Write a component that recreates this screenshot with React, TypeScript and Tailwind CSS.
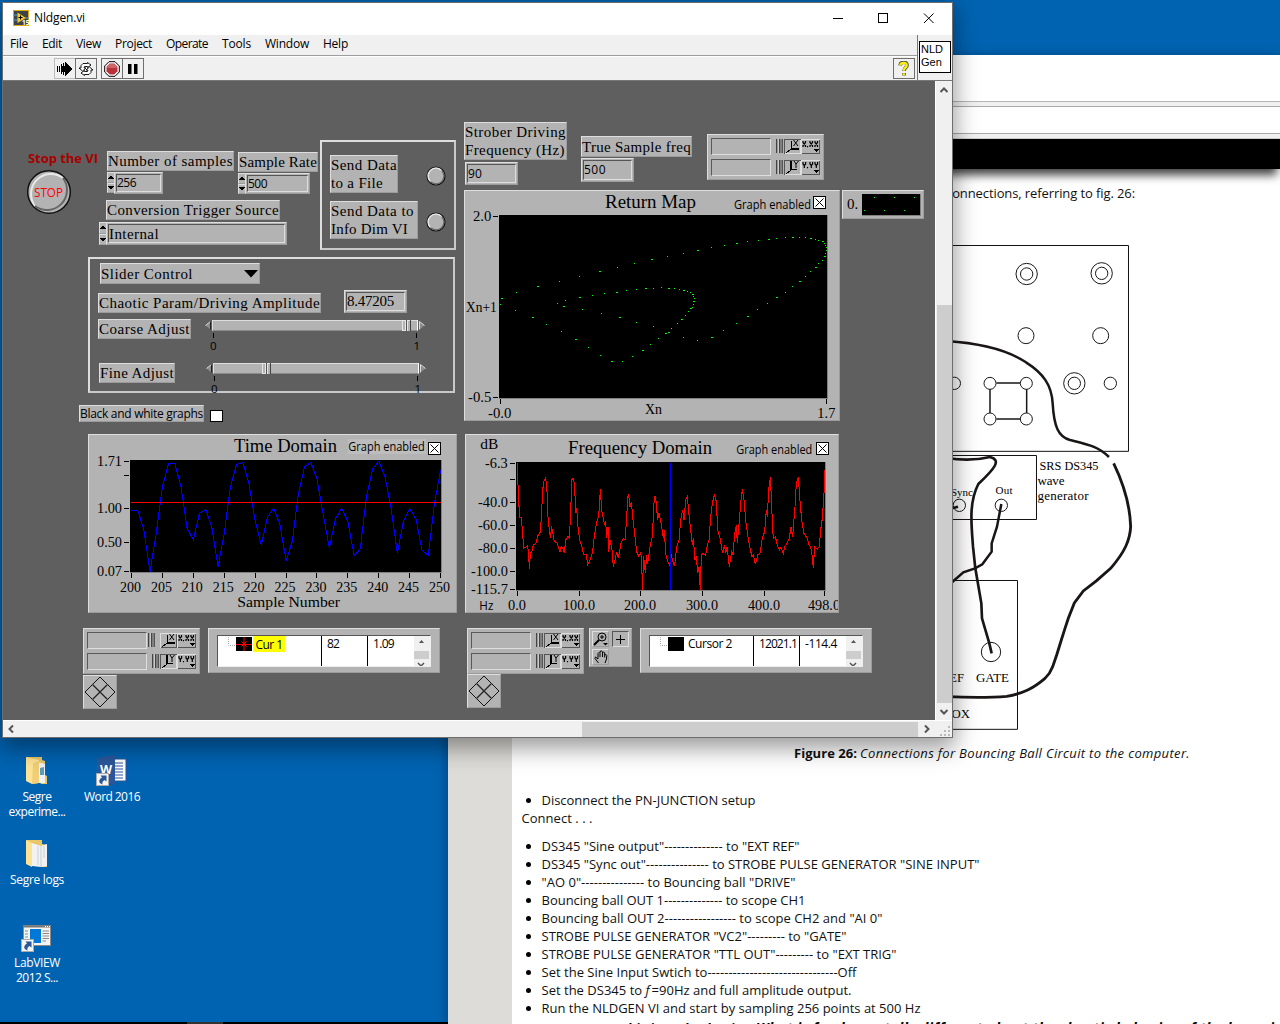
import React, { useLayoutEffect, useRef, useState } from "react";

const serif = "font-['Liberation_Serif',serif]";
const sans = "font-['Open_Sans',sans-serif]";

/* One line of text whose tracking is measured so that it fills `w` pixels. */
function Fit({ w, className = "", children }: { w: number; className?: string; children: string }) {
  const ref = useRef<HTMLSpanElement>(null);
  const [spacing, setSpacing] = useState<number | null>(null);
  useLayoutEffect(() => {
    const el = ref.current;
    if (!el || spacing !== null) return;
    setSpacing((w - el.getBoundingClientRect().width) / children.length);
  }, [w, children, spacing]);
  return (
    <span ref={ref} className={`inline-block shrink-0 whitespace-pre ${className}`} style={{ letterSpacing: spacing ?? 0 }}>
      {children}
    </span>
  );
}

const raised = "bg-[#b3b3b3] border border-t-[#dedede] border-l-[#dedede] border-r-[#9c9c9c] border-b-[#9c9c9c]";

function Label({ className, lines }: { className: string; lines: [string, number][] }) {
  return (
    <div className={`absolute flex flex-col items-start justify-center text-[15px] leading-[18px] ${serif} ${raised} ${className}`}>
      {lines.map(([t, w]) => (
        <Fit key={t} w={w}>{t}</Fit>
      ))}
    </div>
  );
}

function Field({ className, text, w, font = sans }: { className: string; text: string; w: number; font?: string }) {
  return (
    <div className={`absolute flex p-px ${raised} ${className}`}>
      <div className={`flex flex-1 items-center border border-t-[#555] border-l-[#555] border-r-[#dedede] border-b-[#dedede] bg-[#b3b3b3] ${font}`}>
        <Fit w={w}>{text}</Fit>
      </div>
    </div>
  );
}

function Spinner({ className }: { className: string }) {
  return (
    <div className={`absolute flex w-[8px] flex-col ${className}`}>
      <div className={`flex flex-1 items-center justify-center ${raised}`}>
        <svg width="6" height="5" viewBox="0 0 6 5" shapeRendering="crispEdges"><path d="M3 0L6 4H0Z" /></svg>
      </div>
      <div className={`flex flex-1 items-center justify-center ${raised}`}>
        <svg width="6" height="5" viewBox="0 0 6 5" shapeRendering="crispEdges"><path d="M3 5L6 1H0Z" /></svg>
      </div>
    </div>
  );
}

function Led({ className }: { className: string }) {
  return (
    <svg className={`absolute ${className}`} width="20" height="20" viewBox="0 0 20 20">
      <circle cx="10" cy="10" r="9" fill="#b3b3b3" stroke="#111" strokeWidth="1.2" />
      <path d="M4 15A7.8 7.8 0 0 1 15 4" fill="none" stroke="#e6e6e6" strokeWidth="1.4" />
      <path d="M5 16A7.8 7.8 0 0 0 16 5" fill="none" stroke="#666" strokeWidth="1.2" />
    </svg>
  );
}

function Frame({ className }: { className: string }) {
  return <div className={`absolute border-2 border-t-[#dedede] border-l-[#dedede] border-r-[#c9c9c9] border-b-[#c9c9c9] ${className}`} />;
}

function Slider({ className, thumb }: { className: string; thumb: string }) {
  return (
    <div className={`absolute w-[220px] ${className}`}>
      <div className="flex h-[11px] items-center justify-between">
        <svg width="6" height="9" viewBox="0 0 6 9"><path d="M5.5 .5V8.5L.5 4.5Z" fill="#8c8c8c" /><path d="M5.5 .5L.5 4.5" stroke="#ddd" /><path d="M5.5 .5V8.5" stroke="#222" /></svg>
        <div className="relative h-[11px] w-[206px] border border-t-[#dedede] border-l-[#dedede] border-r-white border-b-[#8a8a8a] bg-[#b3b3b3]">
          <div className={`absolute -top-px flex h-[11px] w-[9px] ${thumb}`}>
            <div className="h-full w-[4px] border border-[#e6e6e6] bg-[#b3b3b3]" />
            <div className="h-full w-px bg-[#555]" />
            <div className="h-full w-[3px] border-l border-t border-[#e6e6e6] bg-[#b3b3b3]" />
            <div className="h-full w-px bg-[#444]" />
          </div>
        </div>
        <svg width="6" height="9" viewBox="0 0 6 9"><path d="M.5 .5V8.5L5.5 4.5Z" fill="#8c8c8c" /><path d="M.5 8.5V.5L5.5 4.5" fill="none" stroke="#ddd" /></svg>
      </div>
      <div className={`flex justify-between pt-[2px] pr-[5px] pl-[5px] text-[11.5px] leading-[15px] ${sans}`}>
        <div className="flex flex-col items-center"><div className="h-[5px] w-px bg-black" />0</div>
        <div className="flex flex-col items-center"><div className="h-[5px] w-px bg-black" />1</div>
      </div>
    </div>
  );
}

function CrossBox() {
  return (
    <svg width="13" height="13" viewBox="0 0 13 13">
      <rect x=".5" y=".5" width="12" height="12" fill="#fff" stroke="#000" />
      <path d="M2.5 2.5L10.5 10.5M10.5 2.5L2.5 10.5" stroke="#000" />
    </svg>
  );
}

function ScaleRow({ axis, locked }: { axis: "X" | "Y"; locked: boolean }) {
  return (
    <div className="flex h-[17px] items-center justify-between">
      <div className="h-[17px] w-[60px] border border-t-[#5a5a5a] border-l-[#5a5a5a] border-r-[#dedede] border-b-[#dedede]" />
      <svg className="overflow-visible" width="46" height="17" viewBox="0 0 46 17" shapeRendering="crispEdges">
        <g transform={locked ? "translate(-4 0)" : undefined}>
          <rect x="2" y="1" width="7" height="14" fill="#999" />
          <path d="M2.500 1V15M5.500 1V15" stroke="#444" />
          <path d="M4.500 1V15" stroke="#ccc" />
          <rect x="6" y="1" width="2" height="14" fill="#808080" />
          <path d="M8.500 1V15" stroke="#555" />
        </g>
        <path d="M10.500 15.500V1.500H26.500" fill="none" stroke={locked ? "#dedede" : "#555"} />
        <path d="M10.500 15.500H26.500V1.500" fill="none" stroke={locked ? "#555" : "#dedede"} />
        <path d={axis === "X" ? "M17.500 3V11" : "M17 2V11"} stroke="#000" strokeWidth={axis === "X" ? 1 : 2} />
        <path d={axis === "X" ? "M17 11H25" : "M17 10.500H23"} stroke="#000" strokeWidth={axis === "X" ? 2 : 1} />
        <path d="M17 11L12.500 14.500" stroke="#000" />
        <path d={axis === "X" ? "M19.500 2L24 8M24 2L19.500 8" : "M20 2L22 5L24.500 2M22 5V9"} fill="none" stroke="#000" shapeRendering="auto" />
        <path d="M27.500 15.500V1.500H46" fill="none" stroke="#dedede" />
        <path d="M27.500 15.500H45.500V1.500" fill="none" stroke="#555" />
        <g fill="none" stroke="#000" shapeRendering="auto" strokeWidth="1.200">
          {[29, 36, 41].map((x) => (
            <path key={x} transform={`translate(${x} 3)`} d={axis === "X" ? "M0 0V1.500L2.500 4.500V6M2.500 0V1.500L0 4.500V6" : "M0 0V2L1.300 3.500L2.600 2V0M1.300 3.500V6"} />
          ))}
          <path d="M33.500 8V9.300" />
        </g>
        <path d="M39 11H45L42 14Z" />
      </svg>
    </div>
  );
}

function ScalePalette({ className, lock }: { className: string; lock: boolean }) {
  return (
    <div className={`absolute flex h-[46px] w-[117px] flex-col justify-between px-[3px] py-[3px] ${raised} ${className}`}>
      <ScaleRow axis="X" locked={lock} />
      <ScaleRow axis="Y" locked={false} />
    </div>
  );
}

function NavPad({ className }: { className: string }) {
  return (
    <div className={`absolute flex h-[34px] w-[34px] items-center justify-center ${raised} ${className}`}>
      <svg width="32" height="32" viewBox="0 0 32 32" fill="none" stroke="#000">
        <path d="M16 1L23.300 8.300L16 15.600L8.700 8.300ZM8.300 8.700L15.600 16L8.300 23.300L1 16ZM23.700 8.700L31 16L23.700 23.300L16.400 16ZM16 16.400L23.300 23.700L16 31L8.700 23.700Z" strokeWidth=".9" />
      </svg>
    </div>
  );
}

function CursorTable({ className, name, x, y, selected }: { className: string; name: string; x: string; y: string; selected: boolean }) {
  return (
    <div className={`absolute h-[45px] w-[232px] pt-[6px] pl-[8px] ${raised} ${className}`}>
      <div className={`flex h-[32px] w-[214px] overflow-hidden border border-t-[#555] border-l-[#555] border-r-[#eee] border-b-[#eee] bg-white text-[12px] leading-[15px] ${sans}`}>
        <div className="flex w-[104px] shrink-0 items-start border-r border-black pt-px">
          <svg width="18" height="15" viewBox="0 0 18 15"><path d="M10.500 0V8.500H18" fill="none" stroke="#aaa" strokeDasharray="1 1" /></svg>
          <svg width="16" height="14" viewBox="0 0 16 14">
            <rect width="16" height="14" fill="#000" />
            {selected && <path d="M8 0V4M8 10V14M0 7.500H5M11 7.500H16M5.500 4.500L10.500 9.500M10.500 4.500L5.500 9.500M8 4V10M5 7.500H11" stroke="#f00" />}
          </svg>
          {selected ? (
            <div className="-mt-px ml-px flex h-[16px] w-[32px] items-center justify-center bg-[#ff0]"><Fit w={27}>{name}</Fit></div>
          ) : (
            <div className="-mt-px ml-[4px]"><Fit w={44}>{name}</Fit></div>
          )}
        </div>
        <div className="w-[46px] shrink-0 border-r border-black pl-[5px]"><Fit w={selected ? 12 : 38}>{x}</Fit></div>
        <div className="w-[46px] shrink-0 pl-[5px]"><Fit w={selected ? 21 : 32}>{y}</Fit></div>
        <svg width="16" height="30" viewBox="0 0 16 30">
          <rect width="16" height="30" fill="#f0f0f0" />
          <rect y="15" width="15" height="8" fill="#cdcdcd" />
          <path d="M5 7L7.500 4L10 7Z" fill="#555" />
          <path d="M4 27L7 30L10 27" fill="none" stroke="#555" strokeWidth="1.500" />
        </svg>
      </div>
    </div>
  );
}

type Txt = [string, number, number, number, number];
/* Chart captions: text, left, baseline, width, size (in thirds of a pixel). */
function Captions({ items, family }: { items: Txt[]; family: string }) {
  return (
    <g fontFamily={family} fill="#000">
      {items.map(([t, x, y, w, s]) => (
        <text key={t + x} x={x} y={y} fontSize={s} textLength={w} lengthAdjust="spacingAndGlyphs">{t}</text>
      ))}
    </g>
  );
}

const SERIF = "Liberation Serif, serif";
const SANS = "Open Sans, sans-serif";

const returnDots = [
  123, 355, 122, 373, 169, 337, 232, 319, 297, 304, 358, 289, 417, 274, 471, 262, 523, 250, 574, 238, 622, 229, 669, 220, 711, 211, 753, 202,
  793, 196, 828, 190, 861, 184, 894, 181, 924, 178, 949, 175, 975, 172, 997, 172, 1018, 172, 1036, 172, 1051, 175, 1065, 178, 1076, 181,
  1086, 184, 1093, 190, 1096, 196, 1099, 203, 1099, 211, 1096, 220, 1093, 229, 1086, 240, 1075, 250, 1065, 262, 1051, 275, 1036, 289,
  1017, 304, 997, 319, 975, 336, 949, 352, 922, 370, 892, 389, 861, 409, 828, 430, 790, 451, 753, 473, 712, 481, 670, 472, 625, 457,
  579, 439, 528, 427, 477, 412, 423, 400, 367, 388, 310, 379, 292, 370, 315, 361, 357, 352, 396, 346, 433, 340, 468, 336, 499, 331,
  529, 328, 556, 325, 580, 325, 603, 323, 624, 325, 642, 325, 657, 327, 670, 330, 683, 334, 691, 338, 697, 343, 700, 349, 702, 356,
  700, 364, 699, 373, 697, 381, 691, 385, 685, 394, 676, 406, 664, 418, 651, 430, 634, 445, 616, 459, 594, 475, 570, 493, 547, 510,
  516, 528, 487, 544, 454, 544, 420, 526, 384, 502, 345, 478, 303, 454, 258, 433, 216, 412, 166, 391,
];

function ReturnMap() {
  const dots: React.ReactNode[] = [];
  for (let i = 0; i < returnDots.length; i += 2) {
    const x = Math.floor(returnDots[i] / 3) * 3;
    const y = Math.floor(returnDots[i + 1] / 3) * 3;
    dots.push(<rect key={i} x={x} y={y} width={i % 3 === 0 ? 6 : 3} height="3" />);
  }
  return (
    <svg className="block" width="374" height="229" viewBox="15 33 1122 687">
      <g shapeRendering="crispEdges">
        <rect x="117" y="105" width="987" height="552" fill="#808080" />
        <rect x="117" y="105" width="984" height="549" fill="#000" />
        <g fill="#0f0">{dots}</g>
        <path d="M99 109.500H114M99 652.500H114M121.500 657V672M1099.500 657V672" stroke="#000" strokeWidth="3" />
      </g>
      <Captions family={SERIF} items={[
        ["Return Map", 435, 84, 273, 54], ["2.0", 39, 123, 55, 45], ["-0.5", 24, 666, 70, 45], ["-0.0", 84, 714, 70, 45],
        ["1.7", 1072, 714, 54, 45], ["Xn+1", 18, 397, 92, 42], ["Xn", 555, 702, 51, 42],
      ]} />
      <Captions family={SANS} items={[["Graph enabled", 822, 87, 231, 36]]} />
    </svg>
  );
}

const timeSamples = [
  243, 240, 300, 425, 310, 170, 100, 100, 170, 295, 329, 250, 238, 293, 410, 310, 170, 103, 97, 160, 272, 345, 260, 235, 283, 392, 335, 190,
  110, 97, 147, 253, 355, 265, 235, 275, 376, 357, 200, 116, 94, 140, 237, 370, 272, 235, 267, 361, 376, 220, 120,
];

function TimeDomain() {
  const pts = timeSamples.map((y, i) => `${154.5 + i * 18.55},${y}`).join(" ");
  const ticks = Array.from({ length: 11 }, (_, i) => `M${154.5 + Math.round(i * 30.9) * 3} 429V444`).join("");
  return (
    <svg className="block" width="367" height="177" viewBox="27 15 1101 531">
      <g shapeRendering="crispEdges">
        <rect x="150" y="90" width="936" height="339" fill="#808080" />
        <rect x="150" y="90" width="933" height="336" fill="#000" />
        <polyline points={pts} fill="none" stroke="#00f" strokeWidth="3" />
        <path d="M153 217.500H1083" stroke="#f00" strokeWidth="3" />
        <path d={`M132 94.500H147M132 136.500H147M132 235.500H147M132 337.500H147M132 424.500H147${ticks}`} stroke="#000" strokeWidth="3" />
      </g>
      <Captions family={SERIF} items={[
        ["Time Domain", 462, 66, 309, 54], ["1.71", 51, 108, 75, 45], ["1.00", 51, 249, 75, 45], ["0.50", 51, 351, 75, 45], ["0.07", 51, 438, 75, 45],
        ...Array.from({ length: 11 }, (_, i): Txt => [String(200 + i * 5), 120 + i * 92.7, 486, 63, 45]),
        ["Sample Number", 472, 531, 308, 45],
      ]} />
      <rect x="804" y="27" width="234" height="45" fill="#bdbdbd" />
      <Captions family={SANS} items={[["Graph enabled", 805, 64, 229, 36]]} />
    </svg>
  );
}

const spectrum =
  "172,100 175,195 179,262 184,262 188,310 191,355 200,350 203,347 206,375 208,417 211,372 216,362 220,345 228,340 233,318 240,308 244,265 248,180 252,152 257,143 261,185 264,260 269,310 272,325 274,287 280,318 283,335 290,337 300,367 303,350 308,355 313,370 317,330 324,320 328,325 332,250 335,150 339,143 343,160 348,250 350,235 354,290 359,330 366,350 370,372 378,372 383,403 390,390 397,370 403,320 410,275 416,260 421,178 425,240 430,265 434,285 437,272 440,325 444,290 446,365 450,330 456,360 460,410 466,385 470,365 475,383 483,340 490,325 495,330 500,265 503,200 506,195 510,230 514,215 519,270 524,310 530,365 536,378 541,370 545,380 547,480 549,430 551,378 556,430 560,375 563,400 570,350 577,320 583,200 587,200 593,270 597,250 605,290 610,325 613,300 617,370 622,390 629,408 633,372 640,400 644,407 650,350 657,330 662,270 668,240 672,270 677,210 682,200 686,245 692,300 697,345 700,325 705,390 709,378 713,430 717,410 721,480 724,375 730,370 737,375 741,350 747,330 752,260 757,220 763,195 769,215 773,300 780,325 788,370 793,345 797,370 801,350 808,410 815,365 819,375 824,310 829,285 832,340 838,270 843,210 847,178 852,210 858,280 864,320 870,355 876,380 880,375 886,403 893,375 900,370 907,325 914,305 919,240 922,262 926,180 931,142 934,200 938,300 940,325 946,320 952,345 958,360 962,352 970,370 974,350 981,340 988,325 993,290 998,320 1005,230 1009,160 1015,142 1019,200 1025,270 1032,310 1042,325 1047,345 1052,350 1056,375 1060,415 1064,350 1072,357 1078,350 1082,300 1087,265 1092,190 1094,120";

function FrequencyDomain() {
  return (
    <svg className="block" width="372" height="177" viewBox="18 15 1116 531">
      <g shapeRendering="crispEdges">
        <rect x="168" y="96" width="930" height="387" fill="#808080" />
        <rect x="168" y="96" width="927" height="384" fill="#000" />
        <polyline points={spectrum} fill="none" stroke="#f00" strokeWidth="3" />
        <path d="M631.500 99V480" stroke="#00f" strokeWidth="3" />
        <path d="M150 100.500H165M150 148.500H165M150 217.500H165M150 286.500H165M150 355.500H165M150 424.500H165M150 478.500H165M172.500 483V498M358.500 483V498M541.500 483V498M727.500 483V498M913.500 483V498M1093.500 483V498" stroke="#000" strokeWidth="3" />
      </g>
      <Captions family={SERIF} items={[
        ["Frequency Domain", 324, 72, 432, 54], ["dB", 61, 58, 54, 45], ["-6.3", 75, 114, 68, 45], ["-40.0", 54, 231, 90, 45],
        ["-60.0", 54, 300, 90, 45], ["-80.0", 54, 369, 90, 45], ["-100.0", 33, 438, 111, 45], ["-115.7", 33, 492, 111, 45],
        ["0.0", 144, 540, 54, 45], ["100.0", 309, 540, 96, 45], ["200.0", 492, 540, 96, 45], ["300.0", 678, 540, 96, 45],
        ["400.0", 864, 540, 96, 45], ["498.0", 1044, 540, 96, 45],
      ]} />
      <Captions family={SANS} items={[["Graph enabled", 829, 72, 228, 36], ["Hz", 58, 540, 42, 36]]} />
    </svg>
  );
}

function FrontPanel() {
  return (
    <div className="relative h-[639px] w-[932px] overflow-hidden bg-[#5f5f5f]">
      <div className="absolute -top-[81px] -left-[3px] text-[12px]">
        <div className={`absolute top-[150px] left-[28px] text-[13px] leading-[17px] font-bold text-[#a80000] ${sans}`}><Fit w={70}>Stop the VI</Fit></div>
        <svg className="absolute top-[169px] left-[26px]" width="46" height="46" viewBox="0 0 46 46">
          <circle cx="23" cy="23" r="21.300" fill="#b3b3b3" stroke="#111" strokeWidth="1.500" />
          <path d="M9 37A20 20 0 0 1 37 9" fill="none" stroke="#e8e8e8" strokeWidth="2" />
          <path d="M9 37A20 20 0 0 0 37 9" fill="none" stroke="#666" strokeWidth="2" />
          <text x="8" y="28" fontSize="12.500" fontFamily={SANS} textLength="29" lengthAdjust="spacingAndGlyphs" fill="#f00">STOP</text>
        </svg>

        <Label className="top-[151px] left-[107px] h-[20px] w-[127px]" lines={[["Number of samples", 125]]} />
        <Spinner className="top-[172px] left-[107px] h-[21px]" />
        <Field className="top-[172px] left-[114px] h-[22px] w-[49px]" text="256" w={19} />
        <Label className="top-[152px] left-[238px] h-[20px] w-[80px]" lines={[["Sample Rate", 78]]} />
        <Spinner className="top-[173px] left-[238px] h-[21px]" />
        <Field className="top-[173px] left-[245px] h-[21px] w-[65px]" text="500" w={19} />
        <Label className="top-[200px] left-[106px] h-[20px] w-[174px]" lines={[["Conversion Trigger Source", 172]]} />
        <Spinner className="top-[222px] left-[99px] h-[23px]" />
        <Field className="top-[222px] left-[106px] h-[23px] w-[181px] text-[15px] leading-[19px]" text="Internal" w={50} font={`${serif} pt-px`} />

        <Frame className="top-[140px] left-[320px] h-[110px] w-[136px]" />
        <Label className="top-[155px] left-[330px] h-[38px] w-[68px]" lines={[["Send Data", 66], ["to a File", 52]]} />
        <Led className="top-[166px] left-[426px]" />
        <Label className="top-[201px] left-[330px] h-[38px] w-[88px]" lines={[["Send Data to", 83], ["Info Dim VI", 77]]} />
        <Led className="top-[212px] left-[426px]" />

        <Frame className="top-[257px] left-[88px] h-[136px] w-[367px]" />
        <div className={`absolute top-[263px] left-[100px] flex h-[21px] w-[160px] items-center justify-between pt-px pr-px text-[15px] leading-[18px] ${serif} ${raised}`}>
          <Fit w={92}>Slider Control</Fit>
          <svg width="14" height="8" viewBox="0 0 14 8"><path d="M0 0H14L7 7.500Z" /></svg>
        </div>
        <Label className="top-[293px] left-[98px] h-[20px] w-[223px]" lines={[["Chaotic Param/Driving Amplitude", 221]]} />
        <Field className="top-[290px] left-[344px] h-[23px] w-[63px] text-[15px]" text="8.47205" w={47} font={serif} />
        <Label className="top-[319px] left-[98px] h-[20px] w-[93px]" lines={[["Coarse Adjust", 91]]} />
        <Slider className="top-[320px] left-[205px]" thumb="left-[189px]" />
        <Label className="top-[363px] left-[99px] h-[20px] w-[76px]" lines={[["Fine Adjust", 74]]} />
        <Slider className="top-[363px] left-[206px]" thumb="left-[48px]" />
        <div className={`absolute top-[405px] left-[79px] flex h-[17px] w-[125px] items-center ${sans} ${raised}`}><Fit w={123}>Black and white graphs</Fit></div>
        <div className="absolute top-[410px] left-[210px] h-[12px] w-[13px] border border-black bg-white" />

        <Label className="top-[122px] left-[464px] h-[38px] w-[103px]" lines={[["Strober Driving", 101], ["Frequency (Hz)", 100]]} />
        <Field className="top-[162px] left-[465px] h-[23px] w-[53px]" text="90" w={14} />
        <Label className="top-[136px] left-[581px] h-[21px] w-[111px]" lines={[["True Sample freq", 109]]} />
        <Field className="top-[158px] left-[581px] h-[24px] w-[53px]" text="500" w={22} />
        <ScalePalette className="top-[134px] left-[707px]" lock={false} />

        <div className={`absolute top-[190px] left-[464px] ${raised}`}><ReturnMap /></div>
        <div className="absolute top-[196px] left-[813px]"><CrossBox /></div>
        <div className={`absolute top-[190px] left-[842px] flex h-[29px] w-[82px] items-center justify-between pr-[2px] pl-[4px] text-[15px] ${serif} ${raised}`}>
          0.
          <svg width="59" height="22" viewBox="0 0 59 22" shapeRendering="crispEdges">
            <rect width="59" height="22" fill="#808080" /><rect width="58" height="21" fill="#000" />
            <path d="M12 3.500h1M32 3.500h1M52 3.500h1M2 16.500h1M22 16.500h1M42 16.500h1" stroke="#0f0" />
          </svg>
        </div>

        <div className={`absolute top-[434px] left-[88px] ${raised}`}><TimeDomain /></div>
        <div className="absolute top-[442px] left-[428px]"><CrossBox /></div>
        <div className={`absolute top-[434px] left-[465px] ${raised}`}><FrequencyDomain /></div>
        <div className="absolute top-[442px] left-[816px]"><CrossBox /></div>

        <ScalePalette className="top-[628px] left-[83px]" lock />
        <NavPad className="top-[675px] left-[83px]" />
        <CursorTable className="top-[628px] left-[208px]" name="Cur 1" x="82" y="1.09" selected />
        <ScalePalette className="top-[628px] left-[467px]" lock={false} />
        <NavPad className="top-[674px] left-[467px]" />
        <div className={`absolute top-[628px] left-[589px] grid h-[39px] w-[43px] grid-cols-2 gap-x-[3px] gap-y-[2px] p-[2px] ${raised}`}>
          <div className={`flex items-center justify-center ${raised}`}>
            <svg width="15" height="14" viewBox="0 0 15 14" fill="none" stroke="#000"><circle cx="9" cy="5" r="4" /><path d="M9 3V7M7 5H11" /><path d="M6 8L1 13" strokeWidth="2" /><path d="M10 11H15L12.500 13.500Z" fill="#000" stroke="none" /></svg>
          </div>
          <div className="flex items-center justify-center border border-t-[#555] border-l-[#555] border-r-[#dedede] border-b-[#dedede]">
            <svg width="9" height="9" viewBox="0 0 9 9"><path d="M4.500 0V9M0 4.500H9" stroke="#000" /></svg>
          </div>
          <div className={`flex items-center justify-center ${raised}`}>
            <svg width="14" height="14" viewBox="0 0 14 14" fill="none" stroke="#000"><path d="M4.500 13L1 8.500L1.500 7L4 9V3.500L5 2.500L6 3.500V7M6 3V1.500L7.500 .8L8.500 2V7M8.500 3L9.700 2L10.700 3V7.500M10.700 5L12 4.500L12.800 5.500L12.500 9L11 13" /></svg>
          </div>
        </div>
        <CursorTable className="top-[628px] left-[640px]" name="Cursor 2" x="12021.1" y="-114.4" selected={false} />
      </div>
    </div>
  );
}

function ToolButton({ children, className = "border-[#6f6f6f]" }: { children: React.ReactNode; className?: string }) {
  return <div className={`flex h-[21px] w-[22px] items-center justify-center border bg-[#f0f0f0] ${className}`}>{children}</div>;
}

const menus: [string, number, string][] = [
  ["File", 18, "ml-[7px]"], ["Edit", 20, "ml-[14px]"], ["View", 25, "ml-[14px]"], ["Project", 37, "ml-[14px]"],
  ["Operate", 42, "ml-[14px]"], ["Tools", 29, "ml-[14px]"], ["Window", 44, "ml-[14px]"], ["Help", 25, "ml-[14px]"],
];

function LabViewWindow() {
  return (
    <div className={`absolute top-[2px] left-[2px] flex h-[736px] w-[951px] flex-col border border-[#6e6e6e] bg-[#f0f0f0] shadow-[0_8px_22px_2px_rgba(0,0,0,0.4)] text-[12px] text-black ${sans}`}>
      <div className="flex h-[32px] shrink-0 items-center bg-white pb-[2px] pl-[10px]">
        <svg width="16" height="16" viewBox="0 0 16 16">
          <rect x=".5" y=".5" width="15" height="15" fill="#3d4347" stroke="#e0aa14" />
          <path d="M0 5H5M0 10H5M12 8H16" stroke="#4aa3d8" />
          <path d="M4.500 2.500L13 8L4.500 13Z" fill="#f4c430" />
          <path d="M7.500 5.500V9.500M5.500 7.500H9.500" stroke="#000" />
          <text x="9" y="14.500" fontSize="6.500" fontWeight="700" fontFamily={SANS} fill="#fff">15</text>
        </svg>
        <span className="ml-[5px]"><Fit w={51}>Nldgen.vi</Fit></span>
        <svg className="mr-[3px] ml-auto" width="118" height="30" viewBox="831 3 118 30" fill="none" stroke="#000" shapeRendering="crispEdges">
          <path d="M833 18.500H843M878.500 13.500H887.500V22.500H878.500Z" />
          <path d="M924 13.500L933.500 23M933.500 13.500L924 23" shapeRendering="auto" />
        </svg>
      </div>
      <div className="flex h-[46px] shrink-0 border-b border-[#777]">
        <div className="flex w-[914px] flex-col">
          <div className="flex h-[21px] items-center border-b border-[#9d9d9d] pb-[3px]">
            {menus.map(([t, w, m]) => (
              <span key={t} className={m}><Fit w={w}>{t}</Fit></span>
            ))}
          </div>
          <div className="flex h-[24px] items-center border-t border-white pl-[51px]">
            <ToolButton className="border-[#bdbdbd]">
              <svg width="16" height="14" viewBox="0 0 16 14" shapeRendering="crispEdges"><path d="M8 4V0L16 7L8 14V10H5V4Z" /><path d="M.5 4V10M2.500 4V10M4.500 2V12M6.500 1V13" stroke="#000" /></svg>
            </ToolButton>
            <ToolButton className="-ml-px border-[#6f6f6f]">
              <svg width="16" height="14" viewBox="0 0 16 14" fill="#fff" stroke="#000" strokeWidth=".9"><path d="M3 6V3.500L5 1.500H9.500V.5L13 3L9.500 5.500V4.500H6.500L6 6H8L4.500 9L1 6ZM13 8V10.500L11 12.500H6.500V13.500L3 11L6.500 8.500V9.500H9.500L10 8H8L11.500 5L15 8Z" /></svg>
            </ToolButton>
            <ToolButton className="ml-[4px] border-[#6f6f6f]">
              <svg width="16" height="16" viewBox="0 0 16 16"><path d="M5 .7H11L15.300 5V11L11 15.300H5L.7 11V5Z" fill="#fff" stroke="#000" /><path d="M5.700 2.500H10.300L13.500 5.700V10.300L10.300 13.500H5.700L2.500 10.300V5.700Z" fill="#b8323a" /><path d="M5.700 3H10.300L12.700 5.500V7H3.300V5.500Z" fill="#cf6367" /></svg>
            </ToolButton>
            <ToolButton className="-ml-px border-[#6f6f6f]">
              <svg width="10" height="12" viewBox="0 0 10 12"><path d="M0 1H3.500V11H0ZM6 1H9.500V11H6Z" /></svg>
            </ToolButton>
            <ToolButton className="mr-[2px] ml-auto border-[#6f6f6f]">
              <svg width="12" height="16" viewBox="0 0 12 16" fill="none"><path d="M2 4.500C2.500 0 9.500 .5 9 4.500C8.800 7 6 6.500 6 10M6 12V14.500" stroke="#555" strokeWidth="3.600" /><path d="M2.200 4.500C2.500 1 9 1 8.700 4.500C8.400 6.800 5.800 6.500 5.800 9.700M5.800 12.200V14.200" stroke="#fff200" strokeWidth="2.300" /></svg>
            </ToolButton>
          </div>
        </div>
        <div className="flex flex-1 justify-end border-l border-[#777] pt-[6px] pr-px">
          <div className="flex h-[32px] w-[32px] flex-col items-start border border-black bg-white pt-px pl-px text-[11px] leading-[13px] font-['Liberation_Sans',sans-serif]">
            <Fit w={22}>NLD</Fit>
            <Fit w={21}>Gen</Fit>
          </div>
        </div>
      </div>
      <div className="flex h-[639px] shrink-0">
        <FrontPanel />
        <div className="flex w-[17px] flex-col items-center border-l border-white bg-[#f0f0f0]">
          <svg width="16" height="224" viewBox="0 0 16 224"><path d="M4.500 11L8 7.500L11.500 11" fill="none" stroke="#555" strokeWidth="2" /></svg>
          <div className="h-[398px] w-[15px] bg-[#cdcdcd]" />
          <svg width="16" height="17" viewBox="0 0 16 17"><path d="M4.500 7L8 10.500L11.500 7" fill="none" stroke="#555" strokeWidth="2" /></svg>
        </div>
      </div>
      <div className="flex flex-1 items-center border-t border-white">
        <svg width="579" height="16" viewBox="0 0 579 16"><path d="M10 4.500L6.500 8L10 11.500" fill="none" stroke="#555" strokeWidth="2" /></svg>
        <div className="h-[15px] w-[336px] bg-[#cdcdcd]" />
        <svg width="34" height="16" viewBox="0 0 34 16">
          <path d="M7 4.500L10.500 8L7 11.500" fill="none" stroke="#555" strokeWidth="2" />
          <path d="M29 6h2M29 10h2M25 10h2M29 14h2M25 14h2M21 14h2" transform="translate(1 0)" stroke="#bbb" strokeWidth="2" />
        </svg>
      </div>
    </div>
  );
}

function WiringDiagram() {
  return (
    <svg className="block" width="200" height="495" viewBox="940 240 200 495">
      <g transform="translate(900 360) scale(.33333)" fill="none" stroke="#1a1616" strokeWidth="3">
        <path d="M100 -343.500H685.500V274H100M100 286.500H409.500V478.500H100M100 661.500H352.500V1108H100" stroke="#111" />
        <g strokeWidth="3">
          {[[380, -258], [605, -260], [523, 70]].map(([x, y]) => (
            <g key={x}><circle cx={x} cy={y} r="32" /><circle cx={x} cy={y} r="18.500" /></g>
          ))}
          <circle cx="378" cy="-73" r="24" /><circle cx="602" cy="-73" r="24" />
          <circle cx="163" cy="70" r="18.500" /><circle cx="631" cy="70" r="18.500" />
          <circle cx="178" cy="436" r="18.500" /><circle cx="304" cy="436" r="18.500" /><circle cx="273" cy="876" r="29" />
        </g>
        <path d="M289 69H360M270 88V159M380 88V159M289 177H360" strokeWidth="4.500" />
        <circle cx="270" cy="70" r="18" /><circle cx="379" cy="70" r="18" /><circle cx="270" cy="177" r="18" /><circle cx="379" cy="177" r="18" />
        <g strokeWidth="7.500">
          <path d="M140 -57C250 -50 330 -25 378 7C430 40 455 75 458 130C462 200 475 230 510 240C570 255 595 260 627 291" />
          <path d="M641 310C670 370 690 430 692 500C690 540 675 575 632 625L590 662L550 693L523 729L505 775L495 805L484 840L470 885L458 920L448 940L435 955C400 985 370 1000 320 1009C270 1013 220 1013 140 1010" strokeWidth="8.500" />
          <path d="M140 294C190 302 230 301 270 291C305 300 285 325 235 372C205 430 215 500 219 560L226 625L244 730L246 775L268 850L275 880" strokeWidth="8" />
          <path d="M304 432L291 500L275 550V575L247 613L225 625L190 637L150 672" />
          <path d="M150 446L174 440" />
        </g>
      </g>
      <g fontFamily={SERIF} fill="#000">
        <text x="1039.500" y="470" fontSize="13" textLength="59" lengthAdjust="spacingAndGlyphs">SRS DS345</text>
        <text x="1037.500" y="485" fontSize="13" textLength="27">wave</text>
        <text x="1037.500" y="500" fontSize="13" textLength="51">generator</text>
        <text x="951" y="496" fontSize="11" textLength="22">Sync</text>
        <text x="995.500" y="494" fontSize="11" textLength="17">Out</text>
        <text x="941" y="682" fontSize="13" textLength="23" lengthAdjust="spacingAndGlyphs">REF</text>
        <text x="976" y="682" fontSize="13" textLength="33" lengthAdjust="spacingAndGlyphs">GATE</text>
        <text x="943" y="718" fontSize="13" textLength="27" lengthAdjust="spacingAndGlyphs">BOX</text>
      </g>
    </svg>
  );
}

const steps: [string, number][] = [
  ['DS345 "Sine output"-------------- to "EXT REF"', 258],
  ['DS345 "Sync out"--------------- to STROBE PULSE GENERATOR "SINE INPUT"', 438],
  ['"AO 0"--------------- to Bouncing ball "DRIVE"', 254],
  ["Bouncing ball OUT 1-------------- to scope CH1", 264],
  ['Bouncing ball OUT 2----------------- to scope CH2 and "AI 0"', 341],
  ['STROBE PULSE GENERATOR "VC2"--------- to "GATE"', 305],
  ['STROBE PULSE GENERATOR "TTL OUT"--------- to "EXT TRIG"', 355],
  ["Set the Sine Input Swtich to-------------------------------Off", 315],
];

function Bullet({ children }: { children: React.ReactNode }) {
  return (
    <li className="flex h-[18px] items-center pl-[4px]">
      <span className="mr-[10.5px] h-[5px] w-[5px] rounded-full bg-black" />
      {children}
    </li>
  );
}

function BrowserWindow() {
  return (
    <div className={`absolute top-[55px] left-[448px] flex h-[969px] w-[832px] flex-col overflow-hidden bg-white text-[13px] leading-[18px] text-[#111] shadow-[0_2px_12px_rgba(0,0,0,0.35)] ${sans}`}>
      <div className="h-[47px] shrink-0 border-b border-[#b5b5b5]" />
      <div className="h-[4px] shrink-0 bg-[#f0f0f0]" />
      <div className="h-[28px] shrink-0 border-y border-[#a8a8a8]" />
      <div className="h-[5px] shrink-0 border-b border-[#ccc] bg-[#f0f0f0]" />
      <div className="flex flex-1 bg-[#dddcd8]">
        <div className="ml-[64px] flex w-[768px] flex-col bg-white">
          <div className="-ml-[64px] h-[30px] bg-black shadow-[0_9px_10px_-3px_rgba(0,0,0,0.75)]" />
          <div className="mt-[15px] w-[623px] text-right"><Fit w={189}>connections, referring to fig. 26:</Fit></div>
          <div className="mt-[38px] ml-[428px]"><WiringDiagram /></div>
          <div className="mt-[9px] w-[960px] text-center"><b><Fit w={63}>Figure 26:</Fit></b><i className="ml-[3px]"><Fit w={330}>Connections for Bouncing Ball Circuit to the computer.</Fit></i></div>
          <ul className="mt-[29px] ml-[10px] list-none">
            <Bullet><Fit w={214}>Disconnect the PN-JUNCTION setup</Fit></Bullet>
          </ul>
          <div className="ml-[9.5px]"><Fit w={71}>Connect . . .</Fit></div>
          <ul className="mt-[10px] ml-[10px] list-none">
            {steps.map(([t, w]) => (
              <Bullet key={t}><Fit w={w}>{t}</Fit></Bullet>
            ))}
            <Bullet><Fit w={104}>Set the DS345 to </Fit><i className="mr-[2px]">f</i><Fit w={200}>=90Hz and full amplitude output.</Fit></Bullet>
            <Bullet><Fit w={379}>Run the NLDGEN VI and start by sampling 256 points at 500 Hz</Fit></Bullet>
          </ul>
          <div className="mt-[2px] flex h-[5px] shrink-0 overflow-hidden pl-[96px] font-bold text-black italic">
            <span className="w-[12px] shrink-0 font-normal">(</span>
            <Fit w={136}>This is a Checkpoint: </Fit>
            <Fit w={518} className="text-[14px]">What is fundamentally different about the chaotic behavior of the bounci</Fit>
            <span className="text-[14px]">ng</span>
          </div>
        </div>
      </div>
    </div>
  );
}

function Shortcut() {
  return (
    <g>
      <rect x=".5" y=".5" width="12" height="12" fill="#f4f4f4" stroke="#aaa" />
      <path d="M4.500 2.500H10.500V8.500L8.500 7C6.500 8.500 6 9.500 6.500 11.500C2 10 2.500 6.500 6 4.500Z" fill="#2b5797" />
    </g>
  );
}

function DesktopIcon({ className, lines, children }: { className: string; lines: [string, number][]; children: React.ReactNode }) {
  return (
    <div className={`absolute flex w-[76px] flex-col items-center text-[12px] leading-[15px] text-white ${sans} ${className}`}>
      {children}
      <div className="mt-[3px] flex flex-col items-center">
        {lines.map(([t, w]) => (
          <Fit key={t} w={w}>{t}</Fit>
        ))}
      </div>
    </div>
  );
}

export default function App() {
  return (
    <div className="relative h-[1024px] w-[1280px] overflow-hidden bg-[#0063b1]">
      <DesktopIcon className="top-[755px] left-[-1px]" lines={[["Segre", 29], ["experime...", 57]]}>
        <svg width="32" height="31" viewBox="0 0 32 31">
          <path d="M5 2L21 2V5L24 6V20L26 21V29L20 29Z" fill="#e9c766" />
          <path d="M17 7L24 9V28H17Z" fill="#eef2f4" /><path d="M19 13L23 12V20H19Z" fill="#5a9bc0" />
          <path d="M5 2L18 5V28L11 29L5 26Z" fill="#ffe394" /><path d="M12 8L18 6V28L11 29Z" fill="#f0cf77" />
        </svg>
      </DesktopIcon>
      <DesktopIcon className="top-[755px] left-[74px]" lines={[["Word 2016", 56]]}>
        <svg width="32" height="31" viewBox="0 0 32 31">
          <rect x="16" y="4" width="14" height="22" fill="#fff" stroke="#2b579a" />
          <path d="M19 8H27M19 11H27M19 14H27M19 17H27M19 20H27M19 23H27" stroke="#2b579a" />
          <path d="M1 3L19 0V30L1 27Z" fill="#2b579a" />
          <text x="4" y="19" fontSize="12.500" fontWeight="700" fontFamily={SANS} fill="#fff">W</text>
          <g transform="translate(0 18)"><Shortcut /></g>
        </svg>
      </DesktopIcon>
      <DesktopIcon className="top-[838px] left-[-1px]" lines={[["Segre logs", 54]]}>
        <svg width="32" height="31" viewBox="0 0 32 31">
          <path d="M5 2L21 2V6L26 7V29L20 29Z" fill="#e9c766" />
          <path d="M11 5L20 8L26 6V28L20 29L11 28Z" fill="#f2f2f2" /><path d="M20 8V29M17 8V27M23 8V20" stroke="#c5d0d8" />
          <path d="M5 2L11 5V29L5 26Z" fill="#ffe394" />
        </svg>
      </DesktopIcon>
      <DesktopIcon className="top-[921px] left-[-1px]" lines={[["LabVIEW", 46], ["2012 S...", 42]]}>
        <svg width="32" height="31" viewBox="0 0 32 31">
          <rect x="2.500" y="4.500" width="27" height="20" fill="#f4f4f4" stroke="#8b8b8b" />
          <path d="M2 5.500H30" stroke="#777" strokeWidth="2" /><path d="M24 5.500H29" stroke="#fff" strokeDasharray="1 1" />
          <rect x="9" y="8" width="11" height="14" fill="#0078d7" />
          <path d="M4 10H7M4 13H7M4 16H7M21.500 10H28M21.500 12.500H28M21.500 15H28M21.500 17.500H28M21.500 20H25" stroke="#888" />
          <g transform="translate(0 18)"><Shortcut /></g>
        </svg>
      </DesktopIcon>
      <div className="absolute top-[1022px] left-0 flex h-[2px] w-[448px] bg-black"><div className="ml-[187px] w-[36px] bg-[#333]" /></div>
      <BrowserWindow />
      <LabViewWindow />
    </div>
  );
}
